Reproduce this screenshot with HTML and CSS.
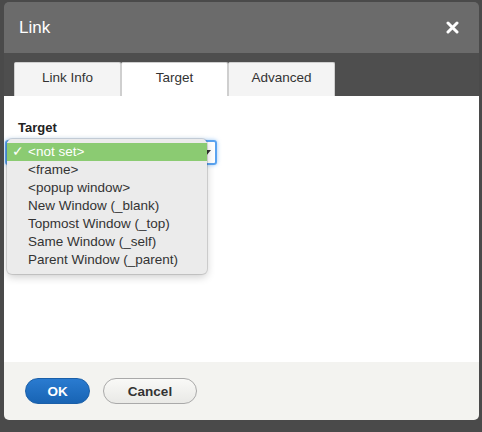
FILE: index.html
```html
<!DOCTYPE html>
<html lang="en">
<head>
    <meta charset="UTF-8">
    <meta name="viewport" content="width=device-width, initial-scale=1.0">
    <title>Link</title>
    <link rel="stylesheet" href="styles.css">
</head>
<body>
    <div class="dialog">
        <div class="titlebar">
            <span class="title">Link</span>
            <svg class="close" width="13" height="13" viewBox="0 0 13 13">
                <path d="M2 2 L11 11 M11 2 L2 11" stroke="#fff" stroke-width="3" stroke-linecap="round"/>
            </svg>
        </div>
        <div class="tabs">
            <div class="tab">Link Info</div>
            <div class="tab active">Target</div>
            <div class="tab">Advanced</div>
        </div>
        <div class="content">
            <label class="field-label">Target</label>
            <div class="select-wrap">
                <div class="select">
                    <span class="arrow"></span>
                </div>
                <ul class="menu">
                    <li class="selected"><span class="check">&#x2713;</span>&lt;not set&gt;</li>
                    <li>&lt;frame&gt;</li>
                    <li>&lt;popup window&gt;</li>
                    <li>New Window (_blank)</li>
                    <li>Topmost Window (_top)</li>
                    <li>Same Window (_self)</li>
                    <li>Parent Window (_parent)</li>
                </ul>
            </div>
        </div>
        <div class="footer">
            <button class="btn btn-ok">OK</button>
            <button class="btn btn-cancel">Cancel</button>
        </div>
    </div>
</body>
</html>
```

FILE: styles.css
```css
body {
    margin: 0;
    background-color: #4a4a4a;
    font-family: "Liberation Sans", Arial, sans-serif;
    height: 432px;
    overflow: hidden;
}
.dialog {
    margin: 2px 0 0 4px;
    width: 475px;
    height: 418px;
    border-radius: 5px;
    overflow: hidden;
    display: flex;
    flex-direction: column;
    background-color: #4e4e4e;
}
.titlebar {
    height: 51px;
    background-color: #6b6b6b;
    display: flex;
    align-items: center;
    justify-content: space-between;
    padding: 0 20px 0 15px;
}
.title {
    color: #fff;
    font-size: 17px;
}
.close {
    display: block;
}
.tabs {
    height: 43px;
    display: flex;
    align-items: flex-end;
    padding-left: 10px;
}
.tab {
    width: 105px;
    height: 33px;
    background-color: #f4f4f4;
    border: 1px solid #cfcfcf;
    border-bottom: none;
    color: #333;
    font-size: 13.5px;
    text-align: center;
    line-height: 29px;
    border-radius: 2px 2px 0 0;
}
.tab.active {
    background-color: #fff;
}
.content {
    height: 266px;
    background-color: #fff;
    padding: 24px 14px 0;
    box-sizing: border-box;
}
.field-label {
    display: block;
    font-size: 13px;
    font-weight: bold;
    color: #222;
}
.select-wrap {
    position: relative;
    margin-top: 5px;
}
.select {
    width: 212px;
    height: 25px;
    margin-left: -13px;
    box-sizing: border-box;
    border: 2px solid #5aa3f0;
    border-radius: 3px;
    box-shadow: 0 0 4px rgba(90, 163, 240, 0.6);
    display: flex;
    align-items: center;
    justify-content: flex-end;
    padding: 0 4px 0 8px;
}
.arrow {
    width: 0;
    height: 0;
    border-left: 5px solid transparent;
    border-right: 5px solid transparent;
    border-top: 6px solid #333;
}
.menu {
    position: absolute;
    left: -11px;
    top: -1px;
    width: 200px;
    margin: 0;
    padding: 4px 0 5px;
    list-style: none;
    background-color: #ebebeb;
    border-radius: 5px;
    box-shadow: 0 0 0 1px rgba(0, 0, 0, 0.12), 0 3px 8px rgba(0, 0, 0, 0.2);
    font-size: 13.5px;
    color: #333;
}
.menu li {
    position: relative;
    height: 18px;
    line-height: 18px;
    padding-left: 21px;
}
.menu li.selected {
    background-color: #8bcb72;
    color: #fff;
}
.check {
    position: absolute;
    left: 5px;
}
.footer {
    flex: 1;
    background-color: #f3f3f0;
    display: flex;
    align-items: center;
    padding-left: 21px;
    gap: 13px;
}
.btn {
    height: 26px;
    border-radius: 13px;
    font-family: inherit;
    font-size: 13.5px;
    font-weight: bold;
    cursor: pointer;
}
.btn-ok {
    width: 65px;
    border: 1px solid #1a5fa8;
    background: linear-gradient(#2a7bd0, #1864b4);
    color: #fff;
}
.btn-cancel {
    width: 94px;
    border: 1px solid #a9a9a9;
    background: linear-gradient(#f9f9f7, #e9e9e6);
    color: #333;
}
```
